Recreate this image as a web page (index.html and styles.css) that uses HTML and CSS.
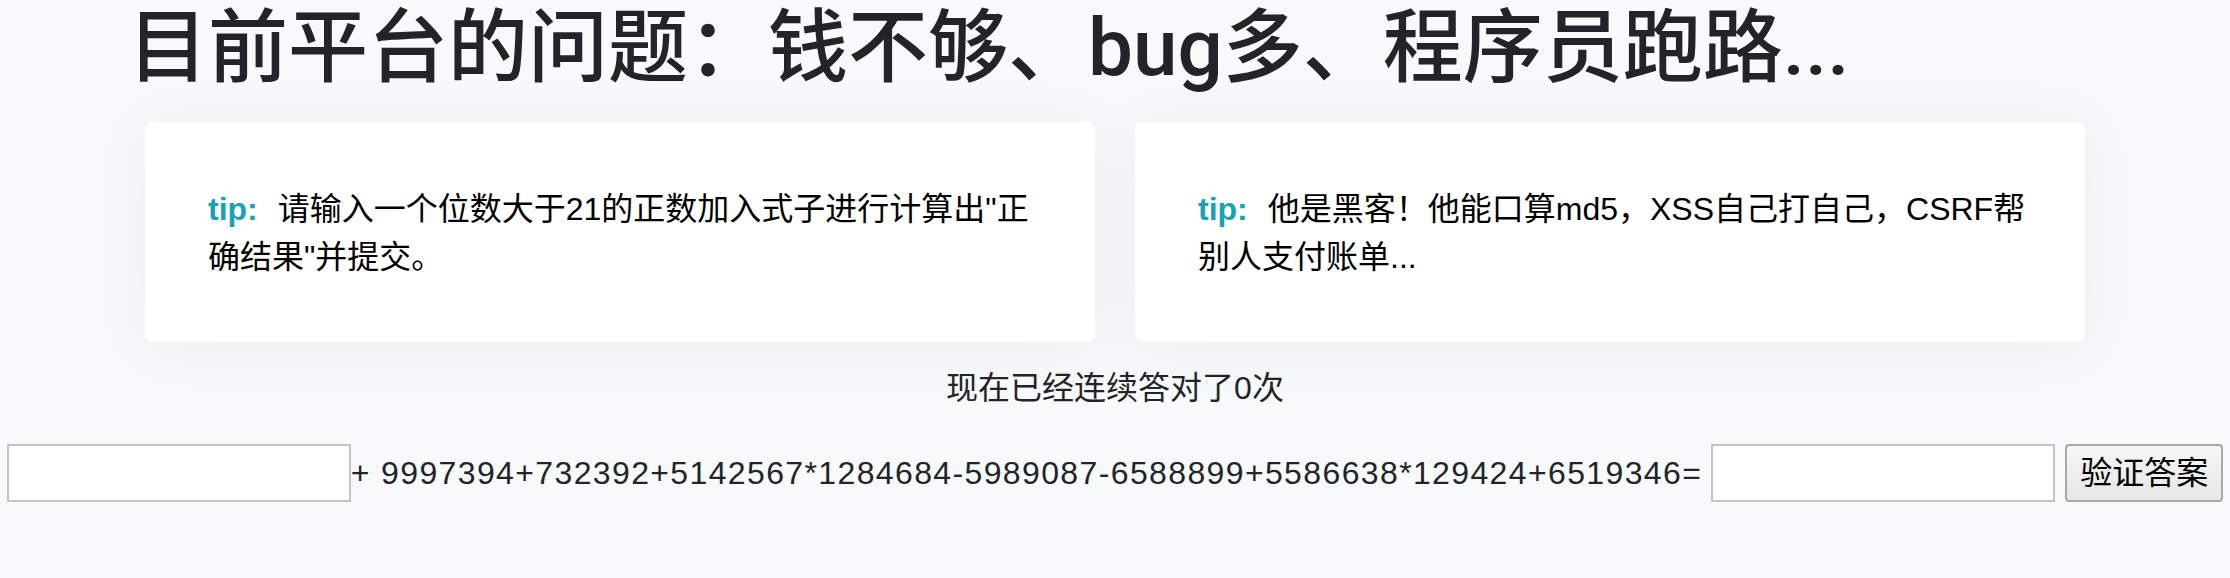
FILE: index.html
```html
<!DOCTYPE html>
<html lang="zh-CN">
<head>
<meta charset="utf-8">
<title>目前平台的问题</title>
<link rel="stylesheet" href="styles.css">
</head>
<body>
<header class="header">
  <h1 class="title">目前平台的问题：钱不够、bug多、程序员跑路...</h1>
</header>
<section class="cards">
  <div class="card">
    <p class="card-text"><span class="tip">tip:</span><span class="msg">请输入一个位数大于21的正数加入式子进行计算出"正确结果"并提交。</span></p>
  </div>
  <div class="card">
    <p class="card-text"><span class="tip">tip:</span><span class="msg">他是黑客！他能口算md5，XSS自己打自己，CSRF帮别人支付账单...</span></p>
  </div>
</section>
<p class="counter">现在已经连续答对了0次</p>
<form class="quiz">
  <input class="field" type="text" name="num">
  <span class="formula">+ 9997394+732392+5142567*1284684-5989087-6588899+5586638*129424+6519346=</span>
  <input class="field" type="text" name="answer">
  <button class="submit" type="button">验证答案</button>
</form>
</body>
</html>
```
FILE: styles.css
```css
html, body {
  margin: 0;
  padding: 0;
}
body {
  background: #f8f9fa;
  color: #212529;
  font-family: "Liberation Sans", "Noto Sans CJK SC", sans-serif;
  font-size: 32px;
  line-height: 48px;
}
.header {
  padding: 0 0 0 128px;
}
.title {
  margin: 0;
  font-family: "Roboto", "Noto Sans CJK SC", sans-serif;
  font-size: 80px;
  font-weight: 500;
  line-height: 96px;
  color: #212529;
}
.cards {
  display: flex;
  justify-content: center;
  gap: 40px;
  margin-top: 26px;
}
.card {
  width: 950px;
  box-sizing: border-box;
  padding: 63px 50px 61px 63px;
  background: #ffffff;
  border-radius: 8px;
  box-shadow: 0 4px 60px rgba(0, 0, 0, 0.06);
}
.card-text {
  margin: 0;
  color: #000000;
  font-size: 32px;
  line-height: 48px;
}
.tip {
  color: #17a2b8;
  font-weight: 700;
  margin-right: 20px;
}
.counter {
  margin: 22px 0 0;
  text-align: center;
  line-height: 48px;
  color: #212529;
}
.quiz {
  display: flex;
  justify-content: center;
  align-items: center;
  margin-top: 32px;
}
.field {
  width: 344px;
  height: 58px;
  box-sizing: border-box;
  margin: 0;
  border: 2px solid #c4c4c4;
  background: #ffffff;
  font-size: 32px;
  padding: 2px 6px;
}
.formula {
  font-size: 32px;
  letter-spacing: 1.37px;
  white-space: nowrap;
  margin-right: 9px;
  color: #212529;
}
.submit {
  margin-left: 10px;
  width: 158px;
  height: 58px;
  box-sizing: border-box;
  border: 2px solid #a8a8a8;
  border-radius: 4px;
  background: linear-gradient(#f6f6f6, #e6e6e6);
  color: #000000;
  font-family: "Liberation Sans", "Noto Sans CJK SC", sans-serif;
  font-size: 32px;
  padding: 0;
  line-height: 1;
}
```
